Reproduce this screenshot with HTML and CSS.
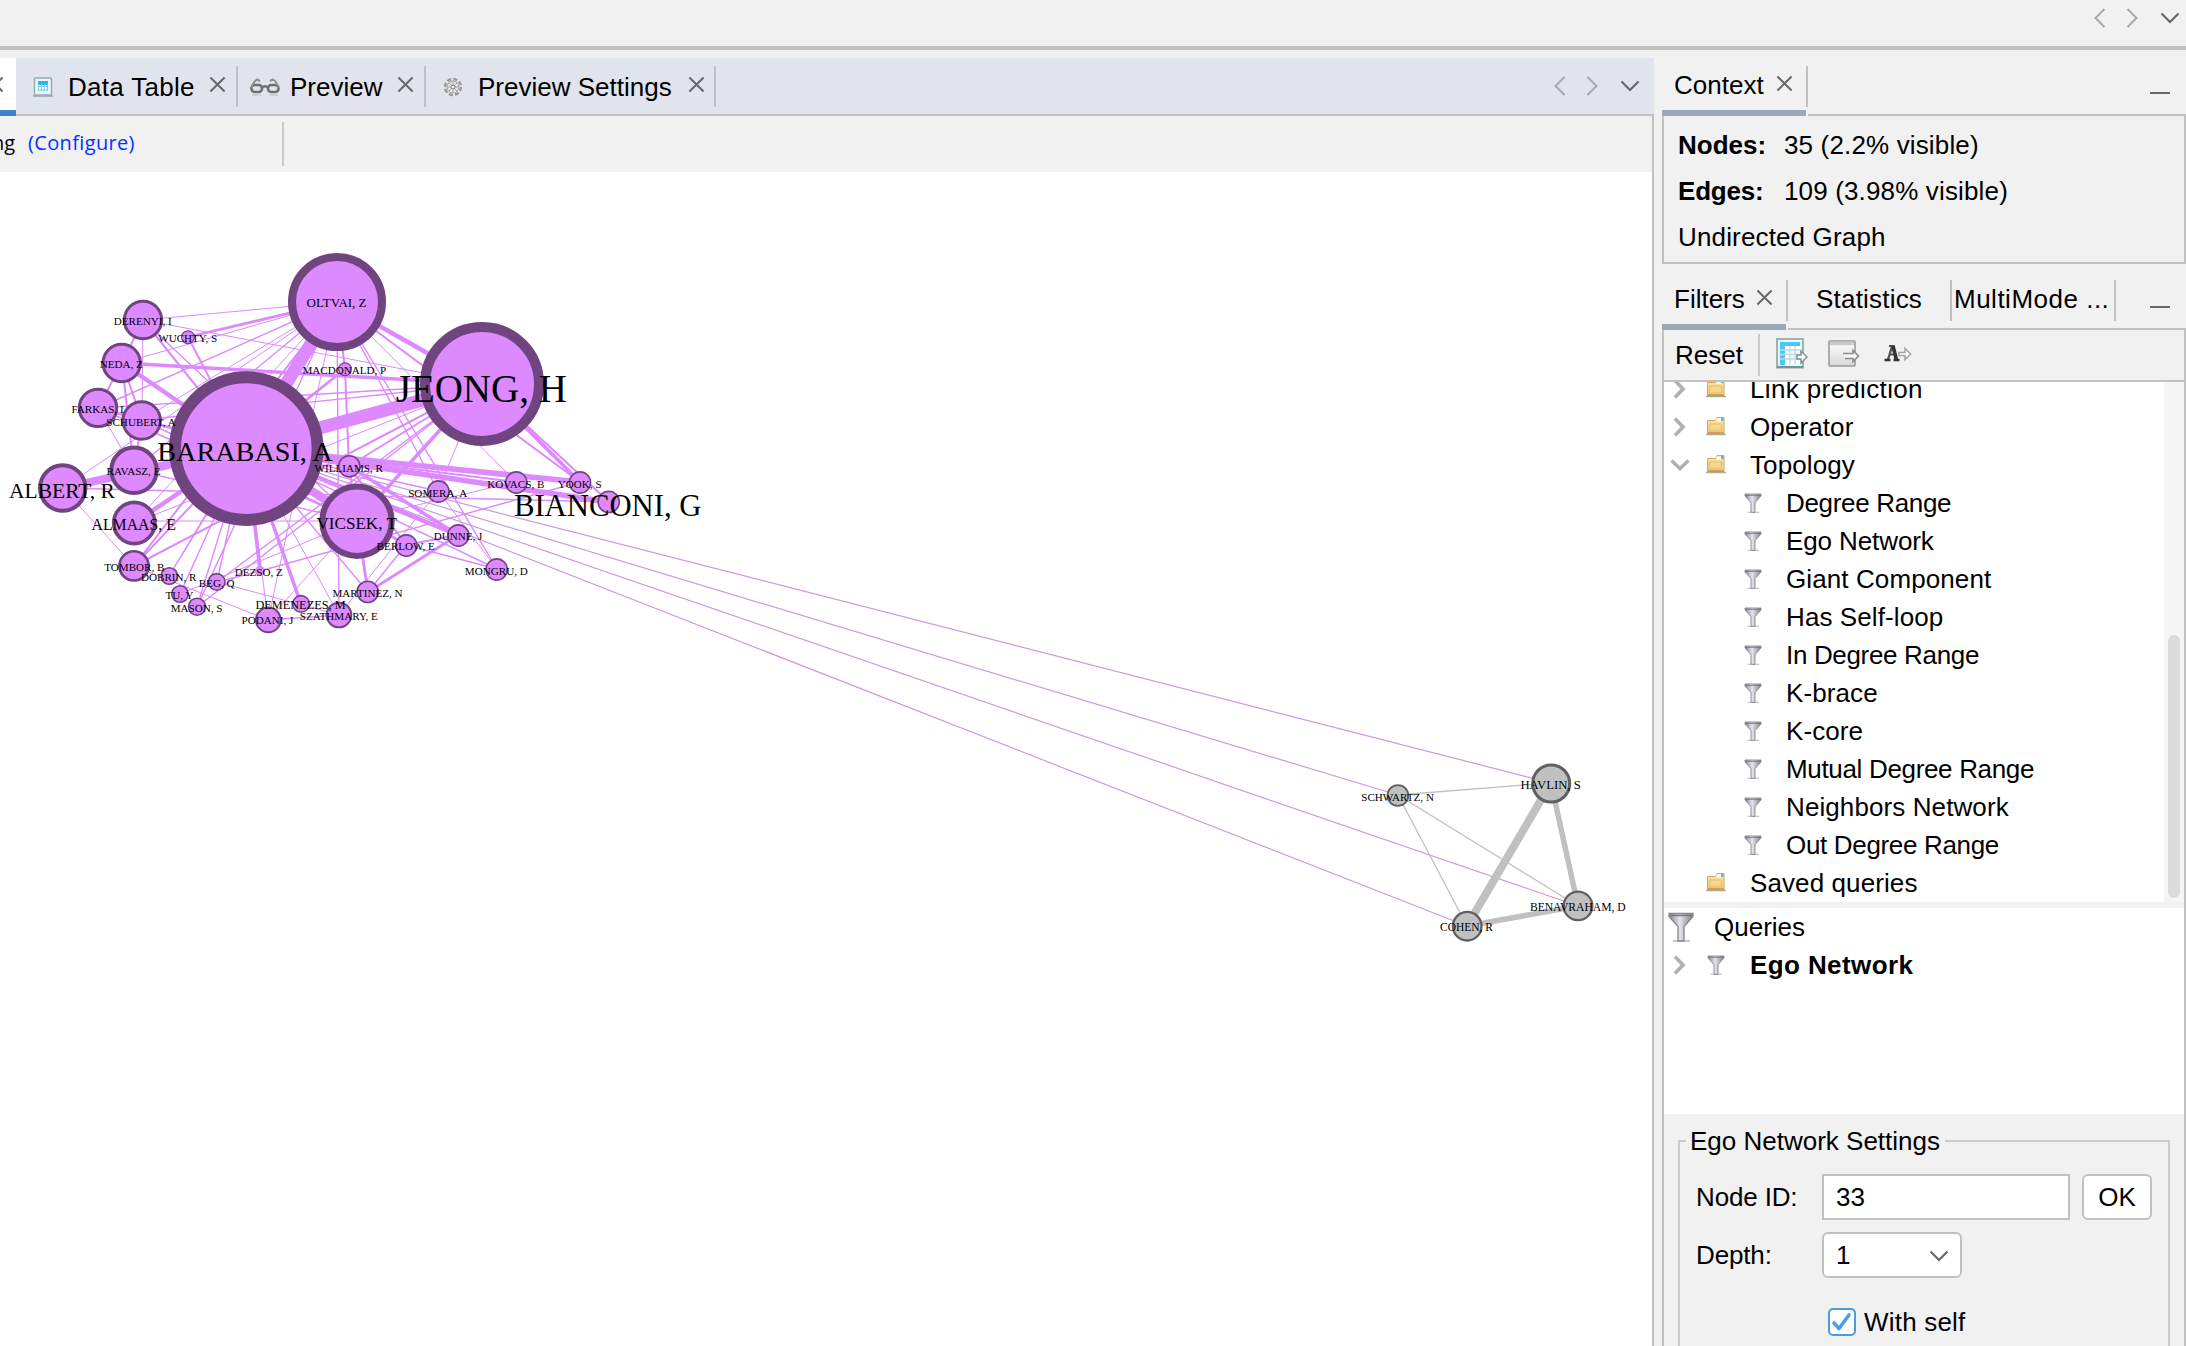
FILE: index.html
```html
<!DOCTYPE html>
<html lang="en">
<head>
<meta charset="utf-8">
<title>Graph workspace</title>
<link rel="stylesheet" href="styles.css">
</head>
<body>
<svg class="defs" width="0" height="0" aria-hidden="true">
  <defs>
    <linearGradient id="metal" x1="0" x2="1" y1="0" y2="0"><stop offset="0" stop-color="#85858f"/><stop offset=".45" stop-color="#e4e4ef"/><stop offset="1" stop-color="#7d7d86"/></linearGradient>
    <linearGradient id="gold" x1="0" x2="0" y1="0" y2="1"><stop offset="0" stop-color="#fbe3a4"/><stop offset="1" stop-color="#f3cf7c"/></linearGradient>
    <linearGradient id="pane" x1="0" x2="0" y1="0" y2="1"><stop offset="0" stop-color="#ffffff"/><stop offset="1" stop-color="#d8d8d8"/></linearGradient>
    <symbol id="x" viewBox="0 0 18 18"><path d="M1.500 1.500 16.500 16.500M16.500 1.500 1.500 16.500" fill="none" stroke="#6a6a6a" stroke-width="2.200"/></symbol>
    <symbol id="left" viewBox="0 0 12 20"><path d="M10.500 1 1.500 10 10.500 19" fill="none" stroke="#a9a9a9" stroke-width="2"/></symbol>
    <symbol id="right" viewBox="0 0 12 20"><path d="M1.500 1 10.500 10 1.500 19" fill="none" stroke="#a9a9a9" stroke-width="2"/></symbol>
    <symbol id="down" viewBox="0 0 20 12"><path d="M1.500 1.500 10 10 18.500 1.500" fill="none" stroke="#686868" stroke-width="2.200"/></symbol>
    <symbol id="folder" viewBox="0 0 20 20"><path d="M0 18.500h20" stroke="#b9a98f" stroke-width="1.500"/><path d="M1.500 4.500h8l1.500-3h7V17.500h-16.500z" fill="url(#gold)" stroke="#d3a95f"/><path d="M10.500 2.500h5v3h-5z" fill="#fff"/><path d="M15 2h2.500v3H15z" fill="#52b9d5"/><path d="M2 17h16" stroke="#c2924a" stroke-width="1.400"/><path d="M3.500 8h12v7h-12z" fill="none" stroke="#e2bc6c"/></symbol>
    <symbol id="funnel" viewBox="0 0 26 30"><path d="M5 29h17" stroke="#c9c9c9" stroke-width="2"/><path d="M1 1.500h24v3L16 14.500V29h-6V14.500L1 4.500z" fill="url(#metal)" stroke="#86868b" stroke-width="1.300"/><path d="M2 3.500h22" stroke="#77777d" stroke-width="1.400"/></symbol>
  </defs>
</svg>

<header class="topbar">
  <svg class="arrow"><use href="#left"/></svg><svg class="arrow"><use href="#right"/></svg><svg class="drop"><use href="#down"/></svg>
</header>

<div class="workspace">
  <main class="editor">
    <nav class="tabs">
      <div class="current"><svg class="close"><use href="#x"/></svg></div>
      <div class="tab tab-data">
        <svg class="ico-table" viewBox="0 0 20 20"><path d="M0 19h20" stroke="#9fabae" stroke-width="1.600"/><rect x="1.500" y="1" width="17" height="17" rx="1" fill="#eaf6f6" stroke="#93adb1" stroke-width="1.400"/><rect x="5" y="4" width="10" height="10" fill="#f2fbff"/><path d="M5 6h10" stroke="#32b2ec" stroke-width="4"/><path d="M5 9.500h10M5 13h10M5.500 7v7M8.500 7v7M11.500 7v7M14.500 7v7" stroke="#7ccbf0"/></svg>
        <span>Data Table</span><svg class="close"><use href="#x"/></svg></div>
      <div class="tab tab-preview">
        <svg class="ico-glasses" viewBox="0 0 30 18"><path d="M2 17h9M19 17h9" stroke="#cfd0d4" stroke-width="2"/><g fill="none" stroke="#707074" stroke-width="2.600"><rect x="1.500" y="7" width="10.500" height="7" rx="3.200"/><rect x="18" y="7" width="10.500" height="7" rx="3.200"/><path d="M12 9.500q3-2.500 6 0"/><path stroke="#8d8d92" stroke-width="2" d="M1.500 10Q3 4 7 1.500l3 1.500M28.500 10Q27 4 23 1.500L20 3"/></g></svg>
        <span>Preview</span><svg class="close"><use href="#x"/></svg></div>
      <div class="tab tab-settings">
        <svg class="ico-gear" viewBox="0 0 20 20"><circle cx="10" cy="10" r="8" fill="#ececec" stroke="#999" stroke-width="2.400" stroke-dasharray="4.200 2.080"/><circle cx="10" cy="10" r="6" fill="#e4e4e4" stroke="#a0a0a0"/><path d="M10 4v12M4 10h12M5.800 5.800l8.400 8.400M14.200 5.800l-8.400 8.400" stroke="#aaa"/><circle cx="10" cy="10" r="2" fill="#fff" stroke="#777"/></svg>
        <span>Preview Settings</span><svg class="close"><use href="#x"/></svg></div>
      <div class="tab-nav"><svg class="arrow"><use href="#left"/></svg><svg class="arrow"><use href="#right"/></svg><svg class="drop"><use href="#down"/></svg></div>
    </nav>
    <div class="toolbar"><span class="mode">ng</span><a class="configure">(Configure)</a></div>
    <div class="canvas">
      <svg class="graph" width="1652" height="1174" viewBox="0 172 1652 1174">
        <g class="bridges">
          <path d="M246 448 1551 783"/><path d="M246 448 1398 795"/><path d="M246 448 1578 906"/><path d="M246 448 1467 926"/>
        </g>
        <g class="edges">
          <path stroke-width="13" d="M246 448 337 302M246 448 482 384"/>
          <path stroke-width="8" d="M246 448 63 488M246 448 357 521"/>
          <path stroke-width="5.500" d="M246 448 580 482M246 448 609 502M246 448 134 470"/>
          <path stroke-width="4.500" d="M337 302 482 384M246 448 134 523M246 448 122 363M246 448 458 535"/>
          <path stroke-width="3.500" d="M246 448 260 571M246 448 301 604M482 384 357 521M482 384 122 363M482 384 580 482M349 466 458 535"/>
          <path stroke-width="2.800" d="M246 448 345 369M458 535 368 592M357 521 368 592M246 448 406 545M337 302 188 337M246 448 98 408M246 448 142 420"/>
          <path stroke-width="2" d="M337 302 580 482M482 384 609 502M337 302 345 369 349 466M246 448 143 320M246 448 188 337M246 448 516 482M246 448 349 466M349 466 406 545M349 466 368 592M458 535 406 545M482 384 349 466M482 384 134 566M337 302 134 566M143 320 122 363 98 408M122 363 142 420 134 470M122 363 134 470M98 408 142 420M134 566 246 448"/>
          <path stroke-width="1.400" d="M337 302 98 408M337 302 134 470M337 302 169 576M337 302 197 607M337 302 438 491M337 302 497 569M337 302 339 615M246 448 169 576M246 448 180 594M246 448 197 607M246 448 217 582M246 448 438 491M246 448 368 592M246 448 497 569M482 384 98 408M482 384 142 420M482 384 217 582M482 384 197 607M63 488 609 502M357 521 143 320M357 521 98 408M357 521 142 420M357 521 134 470M580 482 260 571 217 582M406 545 368 592M268 620 339 615M406 545 497 569"/>
          <path stroke-width="1" d="M337 302 143 320M482 384 143 320M337 302 122 363M337 302 142 420M337 302 63 488M337 302 134 523M337 302 516 482M337 302 268 620M246 448 268 620M246 448 339 615M482 384 438 491 339 615M482 384 134 523M134 521 357 521M357 521 268 620M357 521 180 594M516 482 349 521M143 320 142 420M98 408 134 470M63 488 134 566 268 620M217 582 339 615M438 491 497 569"/>
        </g>
        <g class="links">
          <path class="heavy" d="M1551 783 1467 926"/><path class="medium" d="M1551 783 1578 906 1467 926"/>
          <path d="M1398 795 1551 783M1398 795 1578 906M1398 795 1467 926"/>
        </g>
        <g class="nodes">
          <circle cx="337" cy="302" r="45" stroke-width="8"/>
          <circle cx="246.300" cy="448.600" r="71.300" stroke-width="12"/>
          <circle cx="482" cy="383.900" r="57" stroke-width="10"/>
          <circle cx="349.300" cy="466.300" r="10.600"/>
          <circle cx="357" cy="521.200" r="34.700" stroke-width="6"/>
          <circle cx="143" cy="320" r="18.700" stroke-width="3"/>
          <circle cx="121.700" cy="363" r="18.700" stroke-width="3"/>
          <circle cx="98" cy="407.900" r="18.700" stroke-width="3"/>
          <circle cx="141.700" cy="420.500" r="18.700" stroke-width="3"/>
          <circle cx="134" cy="470.300" r="22.700" stroke-width="4"/>
          <circle cx="62.700" cy="488" r="22.700" stroke-width="4"/>
          <circle cx="134.300" cy="523" r="20.600" stroke-width="3.600"/>
          <circle cx="134" cy="565.900" r="14.600" stroke-width="2.600"/>
          <circle cx="169.300" cy="576" r="8.300"/><circle cx="180" cy="594" r="8.300"/>
          <circle cx="197" cy="606.700" r="8.500"/><circle cx="216.700" cy="581.900" r="8.300"/>
          <circle class="faint" cx="260" cy="571" r="5"/>
          <circle cx="268.300" cy="619.900" r="12.300" stroke-width="2"/>
          <circle cx="301" cy="603.900" r="8.300"/>
          <circle cx="339" cy="615" r="12.300" stroke-width="2"/>
          <circle cx="367.700" cy="591.900" r="10.600"/><circle cx="406.300" cy="545.500" r="10.600"/>
          <circle cx="458.300" cy="535.500" r="10.600"/><circle cx="496.700" cy="569.500" r="10.600"/>
          <circle cx="438.300" cy="491.500" r="10.600"/><circle cx="516.300" cy="482.500" r="10.600"/>
          <circle cx="580" cy="482.500" r="10.600"/><circle cx="608.700" cy="501.900" r="10.600"/>
          <circle cx="345" cy="369.200" r="6.400" stroke-width="1.200"/><circle cx="188" cy="337.200" r="6.400" stroke-width="1.200"/>
        </g>
        <g class="nodes neutral">
          <circle cx="1397.900" cy="795.500" r="10.400"/><circle cx="1551.200" cy="783.500" r="18.500" stroke-width="3"/>
          <circle cx="1578" cy="905.900" r="14.300" stroke-width="2.300"/><circle cx="1467.200" cy="926.200" r="14.300" stroke-width="2.300"/>
        </g>
        <g class="labels">
          <text x="336.600" y="307.400" font-size="13">OLTVAI, Z</text>
          <text x="142.700" y="324.700">DERENYI, I</text>
          <text x="187.700" y="342">WUCHTY, S</text>
          <text x="121.300" y="368">NEDA, Z</text>
          <text x="97.500" y="412.700">FARKAS, I</text>
          <text x="141" y="425.500">SCHUBERT, A</text>
          <text x="133.500" y="475">RAVASZ, E</text>
          <text x="62" y="497.500" font-size="21.500">ALBERT, R</text>
          <text x="133.700" y="530" font-size="15.800">ALMAAS, E</text>
          <text x="134.300" y="571">TOMBOR, B</text>
          <text x="168.800" y="581">DOBRIN, R</text>
          <text x="179.500" y="599.300">TU, Y</text>
          <text x="196.600" y="612">MASON, S</text>
          <text x="216.600" y="587">BEG, Q</text>
          <text x="258.800" y="575.700">DEZSO, Z</text>
          <text x="267.500" y="624.300">PODANI, J</text>
          <text x="300.500" y="609.300" font-size="12.300">DEMENEZES, M</text>
          <text x="338.800" y="619.800">SZATHMARY, E</text>
          <text x="367.500" y="597">MARTINEZ, N</text>
          <text x="405.800" y="550.300">BERLOW, E</text>
          <text x="458" y="540.300">DUNNE, J</text>
          <text x="496.300" y="574.500">MONGRU, D</text>
          <text x="437.800" y="496.700">SOMERA, A</text>
          <text x="515.800" y="487.700">KOVACS, B</text>
          <text x="579.700" y="487.700">YOOK, S</text>
          <text x="607.700" y="515.500" font-size="30.700">BIANCONI, G</text>
          <text x="348.700" y="471.500">WILLIAMS, R</text>
          <text x="344.300" y="374">MACDONALD, P</text>
          <text x="356.700" y="528.700" font-size="17.100">VICSEK, T</text>
          <text x="245" y="461" font-size="28.200">BARABASI, A</text>
          <text x="481.300" y="401.500" font-size="39">JEONG, H</text>
          <text x="1397.600" y="800.700">SCHWARTZ, N</text>
          <text x="1550.600" y="789" font-size="12.700">HAVLIN, S</text>
          <text x="1577.800" y="911" font-size="11.600">BENAVRAHAM, D</text>
          <text x="1466.500" y="931" font-size="11.500">COHEN, R</text>
        </g>
      </svg>
    </div>
  </main>

  <aside class="side">
    <div class="panel-tabs">
      <div class="ptab selected context-tab"><span>Context</span><svg class="close"><use href="#x"/></svg></div>
      <i class="minimize"></i>
    </div>
    <section class="context">
      <p><b>Nodes:</b><span>35 (2.2% visible)</span></p>
      <p><b>Edges:</b><span>109 (3.98% visible)</span></p>
      <p>Undirected Graph</p>
    </section>

    <div class="panel-tabs filters-tabs">
      <div class="ptab selected filters-tab"><span>Filters</span><svg class="close"><use href="#x"/></svg></div>
      <div class="ptab stats-tab"><span>Statistics</span></div>
      <div class="ptab multi-tab"><span>MultiMode ...</span></div>
      <i class="minimize"></i>
    </div>
    <section class="filters">
      <div class="filter-tools">
        <span class="reset">Reset</span>
        <svg class="tool t1" viewBox="0 0 32 32"><path d="M0 30.500h28" stroke="#aab" opacity=".6"/><rect x="1" y="1" width="26" height="28" fill="#e7f6fa" stroke="#9ab4b6" stroke-width="2"/><path d="M1 29h26" stroke="#6f9499" stroke-width="2"/><path d="M4 4h20v5H9v18H4z" fill="#4fc5f8"/><path d="M9 8h15v18H9z" fill="#fff"/><path d="M4 12h20M4 16.500h20M4 21h20M14 8v18M19 8v18" stroke="#b9dbe3" stroke-width="1.300"/><path d="M21 17h4v-4l6 6-6 6v-4h-4z" fill="#fff" stroke="#7c9296" stroke-width="1.500"/></svg>
        <svg class="tool t2" viewBox="0 0 32 32"><rect x="1" y="3" width="26" height="25" rx="1" fill="url(#pane)" stroke="#9a9a9a" stroke-width="1.600"/><path d="M2 5.500h24" stroke="#c9c9d0" stroke-width="3.500"/><path d="M15 15.500h10v-3l5.500 5.500-5.500 5.500v-3H17" fill="#f5f5f5" stroke="#8c8c8c" stroke-width="1.600"/></svg>
        <svg class="tool t3" viewBox="0 0 28 22"><path d="M5 3h4.500M4 16.500 8 3.500M11.500 16.500 8.500 3.500M5.500 11.500h6" fill="none" stroke="#505050" stroke-width="2.200"/><path d="M9 2.500 12.500 16.500" stroke="#333" stroke-width="3.400"/><path d="M.500 17h6M9.500 17h6" stroke="#333" stroke-width="2.400"/><path d="M15 9.500h6v-4l5.500 5.500-5.500 5.500v-4h-6z" fill="#fff" stroke="#a6a6a6" stroke-width="1.600"/></svg>
      </div>
      <div class="tree-area">
        <ul class="tree">
          <li class="group"><svg class="twist" viewBox="0 0 20 20"><path d="M5 1.500 13 10 5 18.500"/></svg><svg class="folder"><use href="#folder"/></svg><span class="wide">Link prediction</span></li>
          <li class="group"><svg class="twist" viewBox="0 0 20 20"><path d="M5 1.500 13 10 5 18.500"/></svg><svg class="folder"><use href="#folder"/></svg><span>Operator</span></li>
          <li class="group"><svg class="twist" viewBox="0 0 20 20"><path d="M1.500 5.500 10 13.500 18.500 5.500"/></svg><svg class="folder"><use href="#folder"/></svg><span>Topology</span></li>
          <li class="leaf"><svg class="funnel"><use href="#funnel"/></svg><span class="tight">Degree Range</span></li>
          <li class="leaf"><svg class="funnel"><use href="#funnel"/></svg><span class="snug">Ego Network</span></li>
          <li class="leaf"><svg class="funnel"><use href="#funnel"/></svg><span>Giant Component</span></li>
          <li class="leaf"><svg class="funnel"><use href="#funnel"/></svg><span>Has Self-loop</span></li>
          <li class="leaf"><svg class="funnel"><use href="#funnel"/></svg><span class="tight">In Degree Range</span></li>
          <li class="leaf"><svg class="funnel"><use href="#funnel"/></svg><span>K-brace</span></li>
          <li class="leaf"><svg class="funnel"><use href="#funnel"/></svg><span>K-core</span></li>
          <li class="leaf"><svg class="funnel"><use href="#funnel"/></svg><span class="tight">Mutual Degree Range</span></li>
          <li class="leaf"><svg class="funnel"><use href="#funnel"/></svg><span>Neighbors Network</span></li>
          <li class="leaf"><svg class="funnel"><use href="#funnel"/></svg><span class="tight">Out Degree Range</span></li>
          <li class="group"><svg class="twist"></svg><svg class="folder"><use href="#folder"/></svg><span>Saved queries</span></li>
        </ul>
        <div class="scrollbar"><div class="thumb"></div></div>
      </div>
      <div class="queries">
        <div class="query-root"><svg class="funnel-big"><use href="#funnel"/></svg><span>Queries</span></div>
        <div class="group"><svg class="twist" viewBox="0 0 20 20"><path d="M5 1.500 13 10 5 18.500"/></svg><svg class="funnel"><use href="#funnel"/></svg><b>Ego Network</b></div>
      </div>
      <div class="settings">
        <fieldset>
          <legend>Ego Network Settings</legend>
          <div class="field"><label>Node ID:</label><div class="input">33</div><div class="button">OK</div></div>
          <div class="field"><label>Depth:</label><div class="select"><span>1</span><svg class="drop"><use href="#down"/></svg></div></div>
          <div class="check"><svg viewBox="0 0 28 28"><rect x="1" y="1" width="26" height="26" rx="4" fill="#fff" stroke="#4b9ce2" stroke-width="2"/><path d="M6 15 11 20.500 21 7" fill="none" stroke="#4b9ce9" stroke-width="3.600" stroke-linecap="round" stroke-linejoin="round"/></svg><span>With self</span></div>
        </fieldset>
      </div>
    </section>
  </aside>
</div>
</body>
</html>
```

FILE: styles.css
```css
* { box-sizing: border-box; }
body {
  margin: 0;
  width: 2186px;
  height: 1346px;
  overflow: hidden;
  background: #f1f1f1;
  color: #000;
  font: 26px/30px "Liberation Sans", Arial, sans-serif;
  white-space: nowrap;
}
svg { display: block; flex: none; }
.defs { height: 0; }
p, ul { margin: 0; padding: 0; list-style: none; }

.topbar {
  display: flex;
  height: 50px;
  padding: 8px 6px 0 0;
  justify-content: flex-end;
  border-bottom: 4px solid #c1c1c1;
}
.arrow { width: 12px; height: 20px; margin-right: 20px; }
.drop { width: 20px; height: 12px; margin-top: 4px; }
.topbar .drop { margin-left: 2px; }

.workspace { display: flex; gap: 8px; height: 1288px; margin-top: 8px; }

.editor { display: flex; flex-direction: column; width: 1654px; }
.tabs {
  display: flex;
  height: 58px;
  background: linear-gradient(#c1c1c1, #c1c1c1) bottom / 100% 2px no-repeat #e1e4ec;
}
.close { width: 17px; height: 17px; }
.current { width: 16px; height: 58px; overflow: hidden; background: #fff; border-bottom: 6px solid #3d83c9; }
.current .close { margin: 18px 0 0 -13px; }
.tab {
  display: flex;
  align-items: center;
  height: 41px;
  margin-top: 8px;
  border-right: 2px solid #c1c1c1;
}
.tab .close { margin: -5px 0 0 auto; }
.tab-data { width: 222px; padding: 0 10px 0 17px; letter-spacing: .3px; }
.ico-table { width: 20px; height: 20px; margin-right: 15px; }
.tab-preview { width: 188px; padding: 0 10px 0 12px; }
.ico-glasses { width: 30px; height: 18px; margin-right: 10px; }
.tab-settings { width: 290px; padding: 0 9px 0 17px; }
.ico-gear { width: 20px; height: 20px; margin-right: 15px; }
.tab-nav { display: flex; margin: 18px 14px 0 auto; }
.tab-nav .drop { margin-left: 2px; }

.toolbar {
  display: flex;
  align-items: center;
  height: 56px;
  padding-bottom: 2px;
  border-right: 2px solid #c1c1c1;
  background: linear-gradient(#c9c9c9, #c9c9c9) 282px 6px / 2px 44px no-repeat #f1f1f1;
  font: 500 20px/26px "Open Sans", "Noto Sans", sans-serif;
}
.mode { width: 15px; display: flex; justify-content: flex-end; }
.configure { margin-left: 13px; color: #0433ff; letter-spacing: .35px; }
.canvas { height: 1174px; background: #fff; border-right: 2px solid #c1c1c1; }

.bridges path { stroke: #cc98e2; stroke-width: 1.2; }
.edges path { stroke: #dd89ff; fill: none; }
.links path { stroke: #c0c0c0; fill: none; stroke-width: 1.3; }
.links .heavy { stroke-width: 8; }
.links .medium { stroke-width: 5.5; }
.nodes { fill: #dd89ff; stroke: #70457f; stroke-width: 1.6; }
.nodes .faint { stroke: none; }
.neutral { fill: #c0c0c0; stroke: #606060; stroke-width: 1.9; }
.labels { font-family: "Liberation Serif", "Times New Roman", serif; font-size: 11.1px; text-anchor: middle; fill: #000; }

.side { width: 524px; }
.panel-tabs {
  display: flex;
  height: 58px;
  background: linear-gradient(#c1c1c1, #c1c1c1) bottom / 100% 2px no-repeat;
}
.ptab { display: flex; height: 58px; padding-top: 12px; background: linear-gradient(#c1c1c1, #c1c1c1) right 8px / 2px 41px no-repeat; }
.selected { background: linear-gradient(#9ca9ba, #9ca9ba) left bottom / calc(100% - 2px) 6px no-repeat, linear-gradient(#c1c1c1, #c1c1c1) right 8px / 2px 41px no-repeat #f1f1f1; }
.ptab .close { margin: 5px 0 0 auto; }
.context-tab { width: 146px; padding: 12px 15px 0 12px; }
.minimize { width: 20px; height: 2px; margin: 34px 16px 0 auto; background: #666; }
.context { height: 148px; padding: 6px 0 0 14px; border: solid #c1c1c1; border-width: 0 2px 2px; }
.context p { display: flex; height: 46px; align-items: center; letter-spacing: .15px; }
.context b { width: 106px; letter-spacing: -.2px; }
.context p:first-child b { letter-spacing: 0; }

.filters-tabs { margin-top: 8px; }
.filters-tab { width: 126px; padding-right: 15px; padding-left: 12px; }
.stats-tab { width: 164px; padding-left: 28px; letter-spacing: .2px; }
.multi-tab { width: 164px; padding-left: 2px; letter-spacing: .5px; }
.filters { height: 1016px; border: solid #c1c1c1; border-width: 0 2px; }
.filter-tools { display: flex; height: 52px; padding: 0 11px; border-bottom: 2px solid #c1c1c1; background: linear-gradient(#cacaca, #cacaca) 94px 4px / 2px 42px no-repeat; }
.reset { width: 101px; padding-top: 10px; }
.tool { width: 32px; height: 32px; margin-top: 8px; }
.t2 { margin-left: 20px; }
.t3 { width: 28px; height: 22px; margin: 13px 0 0 24px; }

.tree-area { display: flex; height: 520px; overflow: hidden; background: #fff; }
.tree { flex: 1; margin-top: -12px; letter-spacing: .1px; }
.wide { letter-spacing: .35px; }
.snug { letter-spacing: -.1px; }
.tight { letter-spacing: -.33px; }
.group, .leaf { display: flex; align-items: center; height: 38px; }
.group { padding-left: 6px; }
.twist { width: 20px; height: 20px; margin-right: 16px; fill: none; stroke: #b1b1b1; stroke-width: 3.6; }
.folder { width: 20px; height: 20px; margin: -2px 24px 0 0; }
.leaf { padding-left: 79px; }
.funnel { width: 20px; height: 20px; margin-right: 23px; }
.queries .funnel { margin-right: 24px; }
.queries b { letter-spacing: .4px; }
.scrollbar { width: 20px; padding: 253px 4px 0; background: #f5f5f5; }
.thumb { height: 263px; border-radius: 6px; background: #dbdbdb; }
.queries { height: 212px; border-top: 6px solid #f1f1f1; background: #fff; }
.query-root { display: flex; align-items: center; height: 38px; padding-left: 4px; }
.funnel-big { width: 26px; height: 30px; margin-right: 20px; }

.settings { height: 232px; padding: 12px 14px 0; overflow: hidden; }
fieldset { height: 280px; margin: 0; padding: 18px 16px 0; border: 2px solid #cacaca; }
legend { margin-left: -10px; padding: 0 5px 0 4px; letter-spacing: 0; }
.field { display: flex; align-items: center; height: 46px; margin-bottom: 12px; }
.field label { width: 126px; letter-spacing: -.15px; }
.input { width: 248px; height: 46px; padding: 6px 12px; border: 2px solid #c1c1c1; background: #fff; }
.button { width: 70px; height: 46px; margin-left: 12px; padding-top: 6px; text-align: center; border: 2px solid #c1c1c1; border-radius: 6px; background: #fff; }
.select { display: flex; justify-content: space-between; width: 140px; height: 46px; padding: 6px 11px 0 12px; border: 2px solid #c1c1c1; border-radius: 6px; background: #fff; }
.select .drop { margin-top: 10px; }
.check { display: flex; align-items: center; margin: 29px 0 0 132px; gap: 8px; letter-spacing: .2px; }
.check svg { width: 28px; height: 28px; }
```
